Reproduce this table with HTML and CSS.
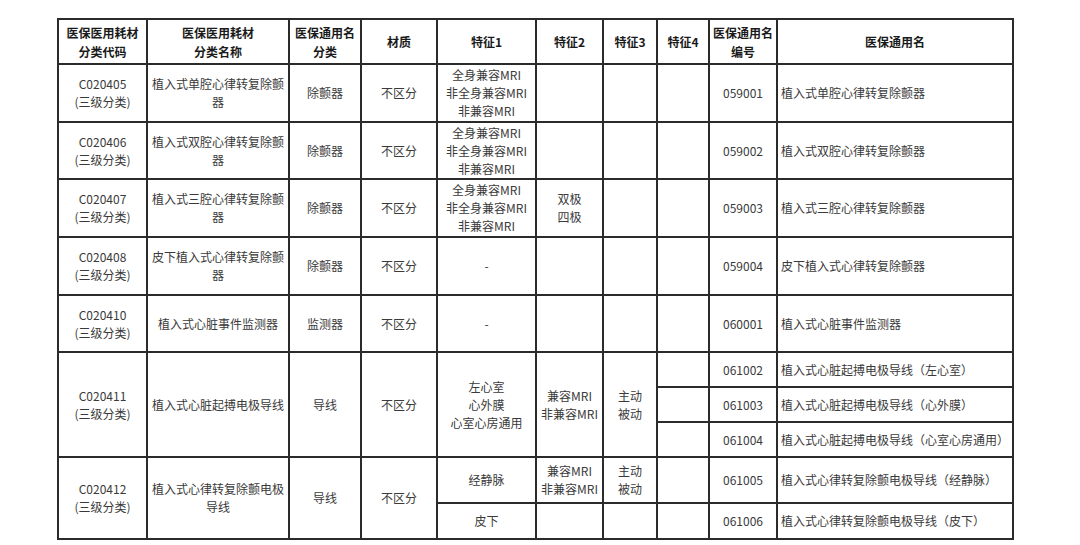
FILE: index.html
```html
<!DOCTYPE html>
<html lang="zh-CN">
<head>
<meta charset="utf-8">
<title>医保医用耗材分类</title>
<link rel="stylesheet" href="styles.css">
</head>
<body>
<div class="wrap">
<table class="grid">
  <colgroup>
    <col class="c1"><col class="c2"><col class="c3"><col class="c4"><col class="c5">
    <col class="c6"><col class="c7"><col class="c8"><col class="c9"><col class="c10">
  </colgroup>
  <thead>
    <tr class="h-head">
      <th>医保医用耗材<br>分类代码</th>
      <th>医保医用耗材<br>分类名称</th>
      <th>医保通用名<br>分类</th>
      <th>材质</th>
      <th>特征1</th>
      <th>特征2</th>
      <th>特征3</th>
      <th>特征4</th>
      <th>医保通用名<br>编号</th>
      <th>医保通用名</th>
    </tr>
  </thead>
  <tbody>
    <tr class="h-58">
      <td>C020405<br>(三级分类)</td>
      <td>植入式单腔心律转复除颤器</td>
      <td>除颤器</td>
      <td>不区分</td>
      <td>全身兼容MRI<br>非全身兼容MRI<br>非兼容MRI</td>
      <td></td><td></td><td></td>
      <td>059001</td>
      <td class="left">植入式单腔心律转复除颤器</td>
    </tr>
    <tr class="h-57">
      <td>C020406<br>(三级分类)</td>
      <td>植入式双腔心律转复除颤器</td>
      <td>除颤器</td>
      <td>不区分</td>
      <td>全身兼容MRI<br>非全身兼容MRI<br>非兼容MRI</td>
      <td></td><td></td><td></td>
      <td>059002</td>
      <td class="left">植入式双腔心律转复除颤器</td>
    </tr>
    <tr class="h-58">
      <td>C020407<br>(三级分类)</td>
      <td>植入式三腔心律转复除颤器</td>
      <td>除颤器</td>
      <td>不区分</td>
      <td>全身兼容MRI<br>非全身兼容MRI<br>非兼容MRI</td>
      <td>双极<br>四极</td>
      <td></td><td></td>
      <td>059003</td>
      <td class="left">植入式三腔心律转复除颤器</td>
    </tr>
    <tr class="h-58">
      <td>C020408<br>(三级分类)</td>
      <td>皮下植入式心律转复除颤器</td>
      <td>除颤器</td>
      <td>不区分</td>
      <td>-</td>
      <td></td><td></td><td></td>
      <td>059004</td>
      <td class="left">皮下植入式心律转复除颤器</td>
    </tr>
    <tr class="h-57">
      <td>C020410<br>(三级分类)</td>
      <td>植入式心脏事件监测器</td>
      <td>监测器</td>
      <td>不区分</td>
      <td>-</td>
      <td></td><td></td><td></td>
      <td>060001</td>
      <td class="left">植入式心脏事件监测器</td>
    </tr>
    <tr class="h-35">
      <td rowspan="3">C020411<br>(三级分类)</td>
      <td rowspan="3">植入式心脏起搏电极导线</td>
      <td rowspan="3">导线</td>
      <td rowspan="3">不区分</td>
      <td rowspan="3">左心室<br>心外膜<br>心室心房通用</td>
      <td rowspan="3">兼容MRI<br>非兼容MRI</td>
      <td rowspan="3">主动<br>被动</td>
      <td></td>
      <td>061002</td>
      <td class="left">植入式心脏起搏电极导线（左心室）</td>
    </tr>
    <tr class="h-35">
      <td></td>
      <td>061003</td>
      <td class="left">植入式心脏起搏电极导线（心外膜）</td>
    </tr>
    <tr class="h-35">
      <td></td>
      <td>061004</td>
      <td class="left">植入式心脏起搏电极导线（心室心房通用）</td>
    </tr>
    <tr class="h-46">
      <td rowspan="2">C020412<br>(三级分类)</td>
      <td rowspan="2">植入式心律转复除颤电极导线</td>
      <td rowspan="2">导线</td>
      <td rowspan="2">不区分</td>
      <td>经静脉</td>
      <td>兼容MRI<br>非兼容MRI</td>
      <td>主动<br>被动</td>
      <td></td>
      <td>061005</td>
      <td class="left">植入式心律转复除颤电极导线（经静脉）</td>
    </tr>
    <tr class="h-36">
      <td>皮下</td>
      <td></td><td></td><td></td>
      <td>061006</td>
      <td class="left">植入式心律转复除颤电极导线（皮下）</td>
    </tr>
  </tbody>
</table>
</div>
</body>
</html>
```

FILE: styles.css
```css
html, body {
  margin: 0;
  padding: 0;
  background: #ffffff;
}
body {
  font-family: "Noto Sans CJK SC", "Noto Sans", sans-serif;
  font-size: 12px;
  color: #3a3a3a;
}
.wrap {
  padding: 18px 0 0 57px;
}
.grid {
  border-collapse: collapse;
  table-layout: fixed;
  width: 955px;
}
.grid th,
.grid td {
  border: 2px solid #2b2b2b;
  padding: 0 3px;
  text-align: center;
  vertical-align: middle;
  line-height: 18px;
  font-weight: 400;
}
.grid th {
  font-weight: 700;
  color: #1a1a1a;
  line-height: 19px;
}
.grid td.left {
  text-align: left;
}
.c1 { width: 89px; }
.c2 { width: 142px; }
.c3 { width: 72px; }
.c4 { width: 76px; }
.c5 { width: 99px; }
.c6 { width: 67px; }
.c7 { width: 54px; }
.c8 { width: 52px; }
.c9 { width: 68px; }
.c10 { width: 236px; }
.h-head { height: 45px; }
.h-58 { height: 58px; }
.h-57 { height: 57px; }
.h-35 { height: 35px; }
.h-46 { height: 46px; }
.h-36 { height: 36px; }
```
